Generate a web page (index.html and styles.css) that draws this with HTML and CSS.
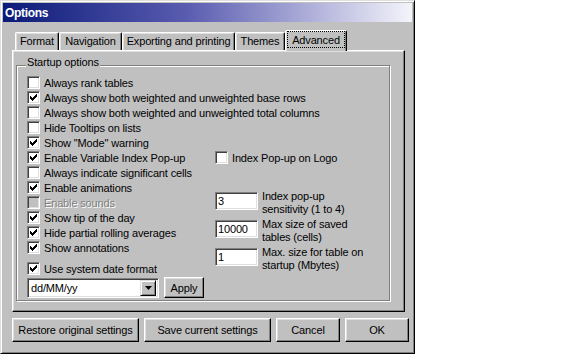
FILE: index.html
```html
<!DOCTYPE html>
<html>
<head>
<meta charset="utf-8">
<title>Options</title>
<link rel="stylesheet" href="styles.css">
</head>
<body>
<div class="window">
  <div class="titlebar"><span class="title">Options</span></div>
  <div class="content">
    <div class="tabs">
      <div class="tab w-format">Format</div>
      <div class="tab w-nav">Navigation</div>
      <div class="tab w-export">Exporting and printing</div>
      <div class="tab w-themes">Themes</div>
      <div class="tab tab-active w-adv"><span class="focus">Advanced</span></div>
    </div>
    <div class="panel">
      <fieldset class="group">
        <legend class="group-title">Startup options</legend>
        <div class="cols">
          <div class="col-left">
            <div class="row"><span class="cb"></span><span class="lbl">Always rank tables</span></div>
            <div class="row"><span class="cb"><svg class="check" width="11" height="11" viewBox="0 0 11 11"><path d="M2 4h1v3h-1z M3 5h1v3h-1z M4 6h1v3h-1z M5 5h1v3h-1z M6 4h1v3h-1z M7 3h1v3h-1z M8 2h1v3h-1z"/></svg></span><span class="lbl">Always show both weighted and unweighted base rows</span></div>
            <div class="row"><span class="cb"></span><span class="lbl">Always show both weighted and unweighted total columns</span></div>
            <div class="row"><span class="cb"></span><span class="lbl">Hide Tooltips on lists</span></div>
            <div class="row"><span class="cb"><svg class="check" width="11" height="11" viewBox="0 0 11 11"><path d="M2 4h1v3h-1z M3 5h1v3h-1z M4 6h1v3h-1z M5 5h1v3h-1z M6 4h1v3h-1z M7 3h1v3h-1z M8 2h1v3h-1z"/></svg></span><span class="lbl">Show "Mode" warning</span></div>
            <div class="row"><span class="cb"><svg class="check" width="11" height="11" viewBox="0 0 11 11"><path d="M2 4h1v3h-1z M3 5h1v3h-1z M4 6h1v3h-1z M5 5h1v3h-1z M6 4h1v3h-1z M7 3h1v3h-1z M8 2h1v3h-1z"/></svg></span><span class="lbl">Enable Variable Index Pop-up</span></div>
            <div class="row"><span class="cb"></span><span class="lbl">Always indicate significant cells</span></div>
            <div class="row"><span class="cb"><svg class="check" width="11" height="11" viewBox="0 0 11 11"><path d="M2 4h1v3h-1z M3 5h1v3h-1z M4 6h1v3h-1z M5 5h1v3h-1z M6 4h1v3h-1z M7 3h1v3h-1z M8 2h1v3h-1z"/></svg></span><span class="lbl">Enable animations</span></div>
            <div class="row"><span class="cb cb-disabled"></span><span class="lbl lbl-disabled">Enable sounds</span></div>
            <div class="row"><span class="cb"><svg class="check" width="11" height="11" viewBox="0 0 11 11"><path d="M2 4h1v3h-1z M3 5h1v3h-1z M4 6h1v3h-1z M5 5h1v3h-1z M6 4h1v3h-1z M7 3h1v3h-1z M8 2h1v3h-1z"/></svg></span><span class="lbl">Show tip of the day</span></div>
            <div class="row"><span class="cb"><svg class="check" width="11" height="11" viewBox="0 0 11 11"><path d="M2 4h1v3h-1z M3 5h1v3h-1z M4 6h1v3h-1z M5 5h1v3h-1z M6 4h1v3h-1z M7 3h1v3h-1z M8 2h1v3h-1z"/></svg></span><span class="lbl">Hide partial rolling averages</span></div>
            <div class="row"><span class="cb"><svg class="check" width="11" height="11" viewBox="0 0 11 11"><path d="M2 4h1v3h-1z M3 5h1v3h-1z M4 6h1v3h-1z M5 5h1v3h-1z M6 4h1v3h-1z M7 3h1v3h-1z M8 2h1v3h-1z"/></svg></span><span class="lbl">Show annotations</span></div>
            <div class="row row-date"><span class="cb"><svg class="check" width="11" height="11" viewBox="0 0 11 11"><path d="M2 4h1v3h-1z M3 5h1v3h-1z M4 6h1v3h-1z M5 5h1v3h-1z M6 4h1v3h-1z M7 3h1v3h-1z M8 2h1v3h-1z"/></svg></span><span class="lbl">Use system date format</span></div>
            <div class="date-row">
              <div class="combo">
                <span class="combo-text">dd/MM/yy</span>
                <span class="combo-btn"><svg width="7" height="4" viewBox="0 0 7 4"><path d="M0 0h7l-3.5 4z"/></svg></span>
              </div>
              <div class="btn btn-apply">Apply</div>
            </div>
          </div>
          <div class="col-right">
            <div class="row"><span class="cb"></span><span class="lbl">Index Pop-up on Logo</span></div>
            <div class="fields">
              <div class="field"><div class="input">3</div><div class="field-label">Index pop-up<br>sensitivity (1 to 4)</div></div>
              <div class="field"><div class="input">10000</div><div class="field-label">Max size of saved<br>tables (cells)</div></div>
              <div class="field"><div class="input">1</div><div class="field-label">Max. size for table on<br>startup (Mbytes)</div></div>
            </div>
          </div>
        </div>
      </fieldset>
    </div>
    <div class="buttons">
      <div class="btn btn-wide">Restore original settings</div>
      <div class="btn btn-wide">Save current settings</div>
      <div class="btn btn-small">Cancel</div>
      <div class="btn btn-small">OK</div>
    </div>
  </div>
</div>
</body>
</html>
```

FILE: styles.css
```css
html, body {
  margin: 0;
  padding: 0;
  background: #ffffff;
}

body {
  font-family: "Liberation Sans", Arial, sans-serif;
  font-size: 11px;
  letter-spacing: -0.15px;
  color: #000000;
}

.window {
  width: 415px;
  height: 354px;
  box-sizing: border-box;
  background: #c0c0c0;
  border: 1px solid;
  border-color: #dfdfdf #000000 #000000 #dfdfdf;
  box-shadow: inset 1px 1px #ffffff, inset -1px -1px #808080;
  padding: 2px;
  display: flex;
  flex-direction: column;
}

.titlebar {
  height: 19px;
  background: linear-gradient(to right, #0a1a78 0%, #5a5cb0 45%, #f4f4fb 100%);
  display: flex;
  align-items: center;
  padding-left: 2px;
}

.title {
  color: #ffffff;
  font-weight: bold;
  font-size: 12px;
  letter-spacing: -0.3px;
}

.content {
  padding: 8px 3px 0 9px;
  display: flex;
  flex-direction: column;
}

/* Tabs */
.tabs {
  height: 20px;
  display: flex;
  align-items: flex-end;
  padding-left: 3px;
  position: relative;
  z-index: 1;
}

.tab {
  height: 18px;
  box-sizing: border-box;
  border-top: 1px solid #ffffff;
  border-left: 1px solid #ffffff;
  border-right: 1px solid #000000;
  border-radius: 2px 2px 0 0;
  box-shadow: inset -1px 0 #808080, inset 1px 1px #dfdfdf;
  display: flex;
  align-items: center;
  justify-content: center;
  padding-bottom: 1px;
}

.w-format { width: 44px; }
.w-nav { width: 63px; }
.w-export { width: 113px; }
.w-themes { width: 50px; }

.tab-active {
  width: 62px;
  height: 21px;
  margin-bottom: -1px;
  background: #c0c0c0;
  padding-bottom: 3px;
}

.focus {
  outline: 1px dotted #000000;
  padding: 2px 4px 1px 4px;
}

/* Panel */
.panel {
  width: 393px;
  height: 262px;
  box-sizing: border-box;
  border: 1px solid;
  border-color: #ffffff #000000 #000000 #ffffff;
  box-shadow: inset -1px -1px #808080, inset 1px 1px #dfdfdf;
  padding: 5px 0 0 3px;
}

.group {
  margin: 0;
  width: 374px;
  box-sizing: border-box;
  border: 1px solid #808080;
  box-shadow: inset 1px 1px #ffffff, 1px 1px #ffffff;
  padding: 0 0 2px 10px;
  min-inline-size: 0;
}

.group-title {
  padding: 0 1px 6px 1px;
  margin-left: -1px;
  line-height: 13px;
  background: #c0c0c0;
}

.cols {
  display: flex;
}

.col-left {
  width: 188px;
  display: flex;
  flex-direction: column;
}

.col-right {
  padding-top: 75px;
  display: flex;
  flex-direction: column;
}

.row {
  height: 15px;
  display: flex;
  align-items: center;
  white-space: nowrap;
}

.row-date {
  margin-top: 6px;
}

.cb {
  width: 13px;
  height: 13px;
  flex: none;
  box-sizing: border-box;
  background: #ffffff;
  border: 1px solid;
  border-color: #808080 #ffffff #ffffff #808080;
  box-shadow: inset 1px 1px #404040, inset -1px -1px #dfdfdf;
  margin-right: 4px;
  display: block;
}

.cb-disabled {
  background: #c0c0c0;
}

.check {
  display: block;
  fill: #000000;
  shape-rendering: crispEdges;
}

.lbl-disabled {
  color: #808080;
  text-shadow: 1px 1px 0 #ffffff;
}

/* Date format row */
.date-row {
  margin-top: 1px;
  height: 21px;
  display: flex;
  align-items: center;
  gap: 5px;
}

.combo {
  width: 132px;
  height: 20px;
  box-sizing: border-box;
  background: #ffffff;
  border: 1px solid;
  border-color: #808080 #ffffff #ffffff #808080;
  box-shadow: inset 1px 1px #404040, inset -1px -1px #dfdfdf;
  padding: 2px;
  display: flex;
  align-items: center;
}

.combo-text {
  flex: 1;
  padding-left: 1px;
}

.combo-btn {
  width: 16px;
  height: 16px;
  box-sizing: border-box;
  background: #c0c0c0;
  border: 1px solid;
  border-color: #dfdfdf #000000 #000000 #dfdfdf;
  box-shadow: inset 1px 1px #ffffff, inset -1px -1px #808080;
  display: flex;
  align-items: center;
  justify-content: center;
}

.combo-btn svg {
  display: block;
  fill: #000000;
}

/* Buttons */
.btn {
  height: 24px;
  box-sizing: border-box;
  background: #c0c0c0;
  border: 1px solid;
  border-color: #ffffff #000000 #000000 #ffffff;
  box-shadow: inset -1px -1px #808080, inset 1px 1px #dfdfdf;
  display: flex;
  align-items: center;
  justify-content: center;
  white-space: nowrap;
}

.btn-apply {
  width: 40px;
  height: 21px;
}

.buttons {
  margin-top: 6px;
  display: flex;
  justify-content: space-between;
}

.btn-wide { width: 127px; }
.btn-small { width: 64px; }

/* Right fields */
.fields {
  margin-top: 25px;
  display: flex;
  flex-direction: column;
  gap: 2px;
}

.field {
  height: 26px;
  display: flex;
  align-items: flex-start;
}

.input {
  width: 43px;
  height: 18px;
  margin-top: 2px;
  margin-right: 4px;
  box-sizing: border-box;
  background: #ffffff;
  border: 1px solid;
  border-color: #808080 #ffffff #ffffff #808080;
  box-shadow: inset 1px 1px #404040, inset -1px -1px #dfdfdf;
  padding: 0 2px;
  display: flex;
  align-items: center;
}

.field-label {
  line-height: 13px;
  white-space: nowrap;
}
```
